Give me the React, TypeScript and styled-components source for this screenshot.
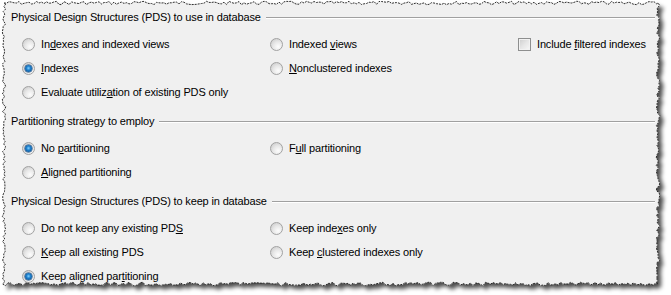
import React from 'react';
import styled, { createGlobalStyle } from 'styled-components';

const Global = createGlobalStyle`
  html, body {
    margin: 0;
    padding: 0;
    background: #ffffff;
  }
`;

const Page = styled.div`
  position: relative;
  width: 671px;
  height: 295px;
  overflow: hidden;
  background: #ffffff;
  font-family: "Liberation Sans", Arial, sans-serif;
  font-size: 11px;
  letter-spacing: -0.15px;
  color: #000;
`;

// torn paper edge, drawn behind the dialog content
const Edge = styled.svg`
  position: absolute;
  left: 0;
  top: 0;
  z-index: 0;
`;

const Content = styled.div`
  position: relative;
  z-index: 1;
  display: flex;
  flex-direction: column;
  gap: 10px;
  padding: 10px 16px 0 11px;
`;

const Section = styled.section`
  display: flex;
  flex-direction: column;
  gap: 8px;
`;

const Header = styled.div`
  display: flex;
  align-items: center;
  height: 14px;
  gap: 5px;
  white-space: nowrap;
`;

const Rule = styled.div`
  flex: 1;
  height: 1px;
  background: #a0a0a0;
  box-shadow: 0 1px 0 #ffffff;
`;

const Grid = styled.div`
  display: grid;
  grid-template-columns: 248px 248px auto;
  grid-auto-rows: 24px;
  padding-left: 11px;
`;

const Option = styled.label`
  display: flex;
  align-items: center;
  gap: 6px;
  white-space: nowrap;
`;

const Radio = styled.span<{ $on?: boolean }>`
  position: relative;
  box-sizing: border-box;
  width: 13px;
  height: 13px;
  flex: none;
  border-radius: 50%;
  border: 1px solid #a2a2a2;
  background: radial-gradient(circle at 65% 70%, #fdfdfd 0%, #e8e8e8 45%, #c4c4c4 100%);

  &::after {
    content: '';
    display: ${(p) => (p.$on ? 'block' : 'none')};
    position: absolute;
    left: 2px;
    top: 2px;
    width: 7px;
    height: 7px;
    border-radius: 50%;
    background: radial-gradient(circle at 50% 45%, #7fd0ff 0%, #1d7fcc 40%, #0a3f78 100%);
    box-shadow: 0 0 0 0.5px #0d3d70;
  }
`;

const Check = styled.span`
  box-sizing: border-box;
  width: 13px;
  height: 13px;
  flex: none;
  border: 1px solid #8e8f8f;
  background: linear-gradient(135deg, #cdcdcd 0%, #e6e6e6 50%, #f8f8f8 100%);
  box-shadow: inset 0 0 0 1px #f2f2f2;
`;

const Key = styled.span`
  text-decoration: underline;
`;

type Opt = { label: string; key: number; on?: boolean; check?: boolean } | null;

const sections: { title: string; rows: Opt[][] }[] = [
  {
    title: 'Physical Design Structures (PDS) to use in database',
    rows: [
      [
        { label: 'Indexes and indexed views', key: 2 },
        { label: 'Indexed views', key: 8 },
        { label: 'Include filtered indexes', key: 8, check: true },
      ],
      [
        { label: 'Indexes', key: 0, on: true },
        { label: 'Nonclustered indexes', key: 0 },
      ],
      [{ label: 'Evaluate utilization of existing PDS only', key: 15 }],
    ],
  },
  {
    title: 'Partitioning strategy to employ',
    rows: [
      [
        { label: 'No partitioning', key: 3, on: true },
        { label: 'Full partitioning', key: 1 },
      ],
      [{ label: 'Aligned partitioning', key: 0 }],
    ],
  },
  {
    title: 'Physical Design Structures (PDS) to keep in database',
    rows: [
      [
        { label: 'Do not keep any existing PDS', key: 27 },
        { label: 'Keep indexes only', key: 9 },
      ],
      [
        { label: 'Keep all existing PDS', key: 0 },
        { label: 'Keep clustered indexes only', key: 5 },
      ],
      [{ label: 'Keep aligned partitioning', key: 16, on: true }],
    ],
  },
];

function Label({ text, at }: { text: string; at: number }) {
  return (
    <span>
      {text.slice(0, at)}
      <Key>{text[at]}</Key>
      {text.slice(at + 1)}
    </span>
  );
}

function tornPath() {
  let seed = 7;
  const rnd = () => {
    seed = (seed * 9301 + 49297) % 233280;
    return seed / 233280 - 0.5;
  };
  const L = 4, T = 3, R = 658, B = 284;
  const pts: string[] = [];
  for (let x = L; x < R; x += 2.5) pts.push(`${x},${(T + rnd() * 3.5).toFixed(1)}`);
  for (let y = T; y < B; y += 2.5) pts.push(`${(R + rnd() * 3.5).toFixed(1)},${y}`);
  for (let x = R; x > L; x -= 2.5) pts.push(`${x},${(B + rnd() * 3.5).toFixed(1)}`);
  for (let y = B; y > T; y -= 2.5) pts.push(`${(L + rnd() * 3.5).toFixed(1)},${y}`);
  return 'M' + pts.join(' L') + ' Z';
}

export default function App() {
  const d = tornPath();
  return (
    <Page>
      <Global />
      <Edge width={671} height={295}>
        <defs>
          <filter id="shade" x="-5%" y="-5%" width="112%" height="118%">
            <feDropShadow dx="4" dy="4" stdDeviation="2.2" floodColor="#000" floodOpacity="0.7" />
          </filter>
        </defs>
        <path d={d} fill="#f0f0f0" filter="url(#shade)" />
        <path d={d} fill="none" stroke="#1a1a1a" strokeWidth="0.9" strokeDasharray="2 1" />
      </Edge>
      <Content>
        {sections.map((s) => (
          <Section key={s.title}>
            <Header>
              <span>{s.title}</span>
              <Rule />
            </Header>
            <Grid>
              {s.rows.map((row, i) =>
                [0, 1, 2].map((c) => {
                  const o = row[c];
                  if (!o) return <span key={`${i}-${c}`} />;
                  return (
                    <Option key={`${i}-${c}`}>
                      {o.check ? <Check /> : <Radio $on={o.on} />}
                      <Label text={o.label} at={o.key} />
                    </Option>
                  );
                })
              )}
            </Grid>
          </Section>
        ))}
      </Content>
    </Page>
  );
}
